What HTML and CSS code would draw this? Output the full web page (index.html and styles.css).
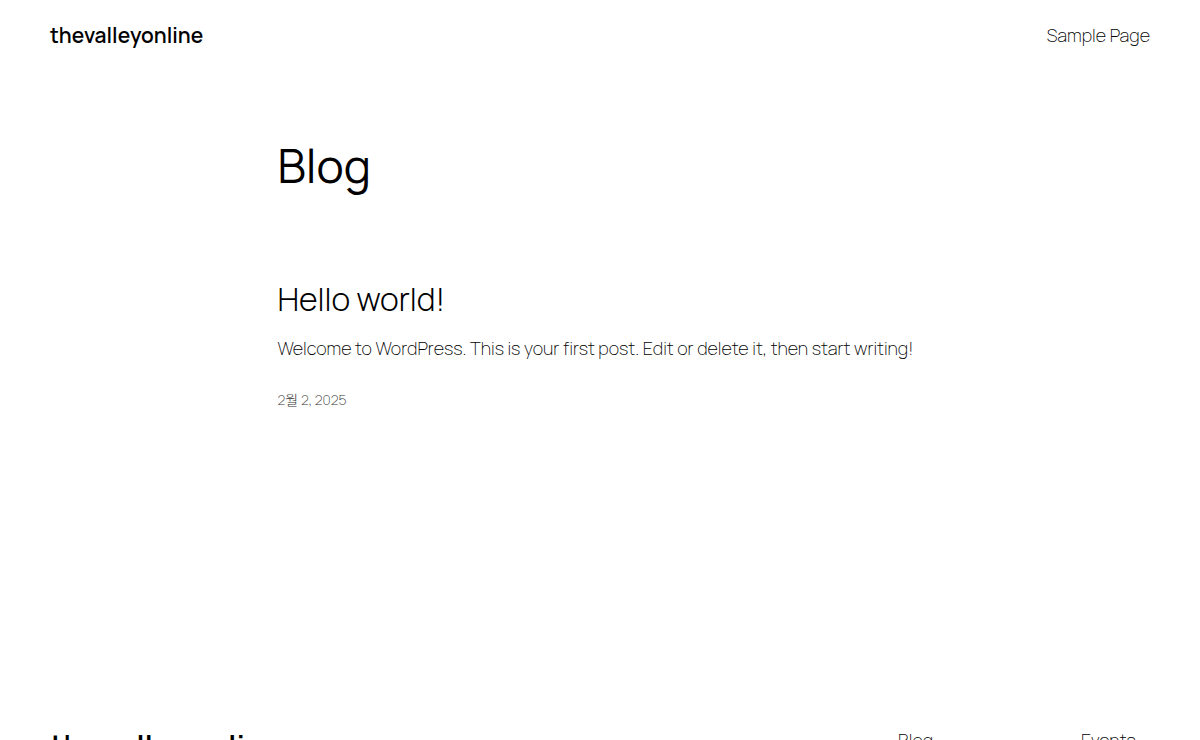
FILE: index.html
```html
<!DOCTYPE html>
<html lang="ko">
<head>
  <meta charset="UTF-8">
  <meta name="viewport" content="width=device-width, initial-scale=1.0">
  <title>Blog – thevalleyonline</title>
  <link rel="stylesheet" href="styles.css">
</head>
<body>
  <header class="site-header">
    <p class="site-title"><a href="#">thevalleyonline</a></p>
    <nav class="site-nav">
      <a href="#">Sample Page</a>
    </nav>
  </header>

  <main class="content">
    <h1 class="page-title">Blog</h1>
    <article class="post">
      <h2 class="post-title"><a href="#">Hello world!</a></h2>
      <p class="post-excerpt">Welcome to WordPress. This is your first post. Edit or delete it, then start writing!</p>
      <p class="post-date"><a href="#"><time datetime="2025-02-02">2월 2, 2025</time></a></p>
    </article>
  </main>

  <footer class="site-footer">
    <h2 class="footer-title"><a href="#">thevalleyonline</a></h2>
    <nav class="footer-nav">
      <a href="#">Blog</a>
      <a href="#">Events</a>
    </nav>
  </footer>
</body>
</html>
```
FILE: styles.css
```css
body {
  margin: 0;
  background: #ffffff;
  color: #000000;
  font-family: Manrope, Inter, "Noto Sans CJK KR", sans-serif;
  font-size: 18px;
  font-weight: 200;
  line-height: 26px;
}
a {
  color: inherit;
  text-decoration: none;
}
h1, h2, p {
  margin: 0;
}

/* Header */
.site-header {
  display: flex;
  justify-content: space-between;
  align-items: center;
  padding: 20px 50px;
}
.site-title {
  font-size: 21px;
  font-weight: 600;
  line-height: 30px;
}

/* Posts */
.content {
  max-width: 645px;
  margin: 0 auto;
  padding: 70px 50px 0;
}
.page-title {
  font-size: 46px;
  font-weight: 400;
  line-height: 52px;
}
.post {
  margin-top: 87px;
}
.post-title {
  font-size: 32px;
  font-weight: 300;
  line-height: 40px;
}
.post-excerpt {
  margin-top: 16px;
}
.post-date {
  margin-top: 26px;
  color: #333333;
  font-size: 14px;
}

/* Footer */
.site-footer {
  display: flex;
  justify-content: space-between;
  padding: 314px 50px 60px;
}
.footer-title {
  font-size: 32px;
  font-weight: 600;
  line-height: 38px;
}
.footer-nav {
  display: grid;
  grid-template-columns: 183px 69px;
}
```
